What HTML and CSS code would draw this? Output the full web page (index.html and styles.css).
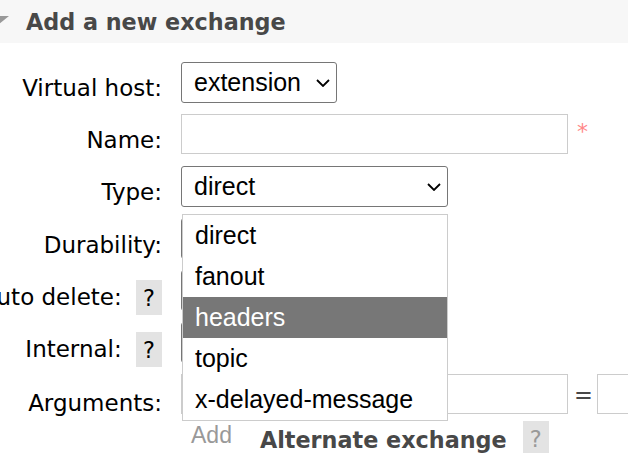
FILE: index.html
```html
<!DOCTYPE html>
<html lang="en">
<head>
    <meta charset="UTF-8">
    <meta name="viewport" content="width=device-width, initial-scale=1.0">
    <title>Exchanges</title>

    <link rel="stylesheet" href="styles.css">
</head>
<body>

<div class="section-head">
    <span class="toggle"></span>
    <h2>Add a new exchange</h2>
</div>

<form class="exchange-form">
    <div class="row">
        <label class="label">Virtual host:</label>
        <div class="select vhost">
            <span>extension</span>
            <svg class="chevron" width="14" height="8" viewBox="0 0 14 8"><path d="M1 1 L7 7 L13 1" /></svg>
        </div>
    </div>

    <div class="row">
        <label class="label">Name:</label>
        <input class="text-input" type="text">
        <span class="mandatory">*</span>
    </div>

    <div class="row">
        <label class="label">Type:</label>
        <div class="select type-select">
            <span>direct</span>
            <svg class="chevron" width="14" height="8" viewBox="0 0 14 8"><path d="M1 1 L7 7 L13 1" /></svg>
        </div>
    </div>

    <!-- these three sit under the open list, only their left edge shows -->
    <div class="row">
        <label class="label low">Durability:</label>
        <div class="select durability"></div>
    </div>

    <div class="row">
        <label class="label low">Auto delete: <span class="help">?</span></label>
        <div class="select yes-no"></div>
    </div>

    <div class="row">
        <label class="label low">Internal: <span class="help">?</span></label>
        <div class="select yes-no"></div>
    </div>

    <div class="row">
        <label class="label lower">Arguments:</label>
        <input class="text-input" type="text">
        <span class="equals">=</span>
        <input class="text-input" type="text">
    </div>

    <div class="extras">
        <span class="add">Add</span>
        <span class="hint">Alternate exchange</span>
        <span class="help muted">?</span>
    </div>

    <!-- open list of the Type select -->
    <ul class="dropdown">
        <li>direct</li>
        <li>fanout</li>
        <li class="selected">headers</li>
        <li>topic</li>
        <li>x-delayed-message</li>
    </ul>
</form>

</body>
</html>
```

FILE: styles.css
```css
body {
    margin: 0;
    width: 628px;
    height: 453px;
    overflow: hidden;
    background: white;
    font-family: "DejaVu Sans", Verdana, sans-serif;
    color: black;
}

.section-head {
    height: 43px;
    display: flex;
    align-items: center;
    background: #f7f7f7;
}

.toggle {
    width: 0;
    height: 0;
    margin-left: -11px;
    margin-right: 17px;
    margin-top: -3px;
    border-left: 10px solid transparent;
    border-right: 10px solid transparent;
    border-top: 8px solid #999;
}

.section-head h2 {
    margin: 0;
    font-size: 22.3px;
    line-height: 26px;
    font-weight: bold;
    color: #484848;
}

.exchange-form {
    position: relative;
    margin-top: 19px;
    display: flex;
    flex-direction: column;
    gap: 11px;
}

.row {
    height: 41px;
    display: flex;
    align-items: flex-start;
    flex-wrap: nowrap;
}

.label {
    width: 162px;
    flex-shrink: 0;
    margin-right: 19px;
    padding-top: 13px;
    box-sizing: border-box;
    display: flex;
    justify-content: flex-end;
    align-items: flex-start;
    white-space: pre;
    font-size: 23px;
    line-height: 26px;
}

.label.low {
    padding-top: 14px;
}

.label.lower {
    padding-top: 16px;
}

.help {
    display: inline-block;
    height: 35px;
    margin-top: -4px;
    margin-left: 7px;
    padding: 2px 7px 0;
    box-sizing: border-box;
    background: #e3e3e3;
    font-size: 22.5px;
    line-height: 33px;
    color: black;
}

.help.muted {
    color: #999;
    margin: 0;
}

.select {
    height: 41px;
    box-sizing: border-box;
    flex-shrink: 0;
    display: flex;
    align-items: center;
    padding: 0 6px 0 12px;
    border: 1px solid #767676;
    border-radius: 3px;
    background: white;
    font-family: "Liberation Sans", Arial, sans-serif;
    font-size: 25px;
}

.select .chevron {
    margin-left: auto;
    fill: none;
    stroke: black;
    stroke-width: 1.8;
}

.vhost {
    width: 156px;
}

.type-select {
    width: 267px;
}

.durability {
    width: 150px;
}

.yes-no {
    width: 90px;
}

.text-input {
    width: 387px;
    height: 40px;
    box-sizing: border-box;
    flex-shrink: 0;
    margin: 0;
    border: 1px solid #cccccc;
    background: white;
    font-size: 25px;
}

.mandatory {
    margin-left: 9px;
    padding-top: 5px;
    font-size: 22px;
    line-height: 26px;
    color: #ff8888;
}

.equals {
    align-self: center;
    margin: 0 4px 0 6px;
    font-size: 22.5px;
    line-height: 26px;
    color: #484848;
}

.extras {
    margin-top: -5px;
    padding-left: 191px;
    display: flex;
    align-items: flex-start;
}

.add {
    padding-top: 1px;
    font-family: "Liberation Sans", Arial, sans-serif;
    font-size: 23px;
    line-height: 26px;
    color: #999;
}

.hint {
    margin-left: 28px;
    margin-right: 16px;
    padding-top: 6px;
    font-size: 22.3px;
    line-height: 26px;
    font-weight: bold;
    color: #484848;
}

.dropdown {
    position: absolute;
    top: 152px;
    left: 182px;
    width: 266px;
    margin: 0;
    padding: 0;
    list-style: none;
    box-sizing: border-box;
    border: 1px solid #cccccc;
    background: white;
    font-family: "Liberation Sans", Arial, sans-serif;
    font-size: 25px;
}

.dropdown li {
    height: 41px;
    line-height: 41px;
    padding-left: 12px;
    white-space: nowrap;
}

.dropdown li.selected {
    background: #777777;
    color: white;
}
```
